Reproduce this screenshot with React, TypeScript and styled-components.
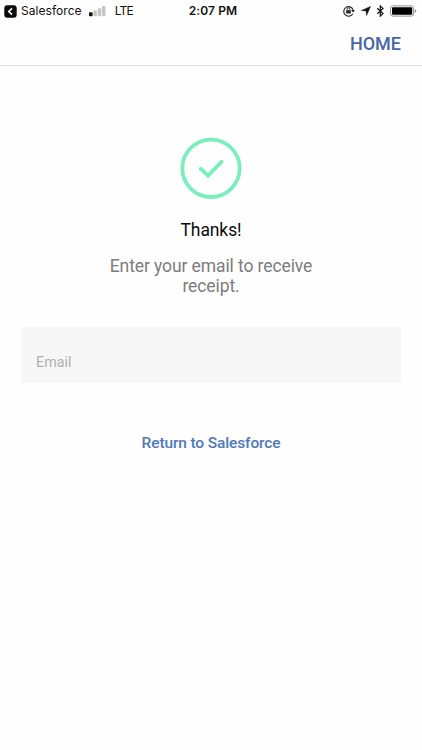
import React from "react";
import styled, { createGlobalStyle } from "styled-components";

const GlobalStyle = createGlobalStyle`
  * { box-sizing: border-box; }
  body { margin: 0; background: #fefefe; }
`;

const Screen = styled.div`
  display: flex;
  flex-direction: column;
  width: 422px;
  height: 750px;
  overflow: hidden;
  background: #fefefe;
  font-family: Roboto, sans-serif;
`;

const StatusBar = styled.header`
  display: grid;
  grid-template-columns: 1fr auto 1fr;
  align-items: center;
  height: 22px;
  padding: 0 4px;
  font-family: Inter, sans-serif;
  color: #111;
`;

const StatusGroup = styled.div<{ $end?: boolean }>`
  display: flex;
  align-items: center;
  justify-content: ${(p) => (p.$end ? "flex-end" : "flex-start")};
  padding-right: ${(p) => (p.$end ? 1 : 0)}px;
`;

const StatusText = styled.span<{ $bold?: boolean; $spacing: number; $left?: number }>`
  font-size: 12px;
  line-height: 22px;
  font-weight: ${(p) => (p.$bold ? 600 : 400)};
  letter-spacing: ${(p) => p.$spacing}px;
  margin-left: ${(p) => p.$left ?? 0}px;
  white-space: nowrap;
`;

const Glyph = styled.svg<{ $left?: number }>`
  display: block;
  flex: none;
  margin-left: ${(p) => p.$left ?? 0}px;
`;

const NavBar = styled.nav`
  display: flex;
  justify-content: flex-end;
  align-items: center;
  height: 44px;
  padding-right: 21px;
  border-bottom: 1px solid #dedede;
`;

const HomeButton = styled.button`
  padding: 0;
  border: 0;
  background: none;
  font: 500 18px/22px Roboto, sans-serif;
  color: #4566a8;
`;

const Content = styled.main`
  display: flex;
  flex-direction: column;
  align-items: center;
  padding: 71px 21px 0 21px;
`;

const Title = styled.h1`
  margin: 20px 0 0;
  font-size: 17.5px;
  line-height: 22px;
  font-weight: 400;
  letter-spacing: -0.1px;
  color: #0c0c0c;
`;

const Message = styled.p`
  width: 230px;
  margin: 15px 0 0;
  font-size: 17.5px;
  line-height: 20px;
  letter-spacing: -0.1px;
  text-align: center;
  color: #7c7c7c;
`;

const EmailField = styled.label`
  display: flex;
  align-items: flex-end;
  width: 100%;
  height: 56px;
  margin-top: 31px;
  padding: 0 15px 11px;
  background: #f7f7f7;
  font-size: 14.3px;
  line-height: 20px;
  color: #b0b0b0;
`;

const ReturnLink = styled.a`
  margin-top: 50px;
  font-size: 15.5px;
  line-height: 20px;
  font-weight: 500;
  letter-spacing: -0.13px;
  color: #5079b5;
`;

export default function App() {
  return (
    <Screen>
      <GlobalStyle />
      <StatusBar>
        <StatusGroup>
          <Glyph width="13" height="13" viewBox="0 0 13 13">
            <rect x="0.3" y="0.3" width="12.4" height="12.4" rx="3" fill="#0a0a0a" />
            <path d="M8 3.4 4.8 6.5 8 9.6" fill="none" stroke="#fff" strokeWidth="1.6" />
          </Glyph>
          <StatusText $spacing={0.05} $left={4}>Salesforce</StatusText>
          <Glyph $left={7} width="18" height="12" viewBox="0 0 18 12">
            <rect x="0" y="7.3" width="3.6" height="4" rx="0.7" fill="#111" />
            <rect x="4.5" y="5.3" width="3.4" height="6" rx="0.7" fill="#c4c4c4" />
            <rect x="8.8" y="3.2" width="3.4" height="8.1" rx="0.7" fill="#c4c4c4" />
            <rect x="13" y="1" width="3.4" height="10.3" rx="0.7" fill="#c4c4c4" />
          </Glyph>
          <StatusText $spacing={-0.7} $left={8}>LTE</StatusText>
        </StatusGroup>
        <StatusText $bold $spacing={0.1} $left={4}>2:07 PM</StatusText>
        <StatusGroup $end>
          <Glyph width="13" height="12" viewBox="0 0 13 12">
            <path d="M9.8 8.7A4.8 4.8 0 1 1 10.1 4.8" fill="none" stroke="#222" strokeWidth="1.1" />
            <path d="M8.2 5H12L10.1 7.4Z" fill="#222" />
            <rect x="3.2" y="5.2" width="4.6" height="3.4" rx="0.4" fill="#222" />
            <path d="M4.1 5.4V4.3a1.4 1.4 0 0 1 2.8 0v1.1" fill="none" stroke="#222" strokeWidth="0.9" />
          </Glyph>
          <Glyph $left={5} width="10" height="10" viewBox="0 0 10 10">
            <path d="M9.5.5 5.6 9.4 5.1 4.9.5 4.5Z" fill="#111" stroke="#111" strokeWidth="0.5" strokeLinejoin="round" />
          </Glyph>
          <Glyph $left={5} width="9" height="12" viewBox="0 0 9 12">
            <path d="M1.3 3.3 7 8.6 4.3 11.1V.9L7 3.4 1.3 8.7" fill="none" stroke="#111" strokeWidth="1.2" />
          </Glyph>
          <Glyph $left={5} width="27" height="12" viewBox="0 0 27 12">
            <rect x="0.6" y="0.9" width="23" height="10.2" rx="2.3" fill="#fff" stroke="#777" strokeWidth="0.8" />
            <rect x="2" y="2.3" width="20.2" height="7.4" rx="1" fill="#000" />
            <path d="M24.8 4.2q1.5.5 1.5 1.8t-1.5 1.8Z" fill="#888" />
          </Glyph>
        </StatusGroup>
      </StatusBar>
      <NavBar>
        <HomeButton>HOME</HomeButton>
      </NavBar>
      <Content>
        <Glyph width="62" height="62" viewBox="0 0 62 62" fill="none" stroke="#7aeebb" strokeWidth="3.8">
          <circle cx="31" cy="31.3" r="28.7" />
          <path d="M20.6 31.7 28 38.6 41.7 24.7" strokeLinecap="round" />
        </Glyph>
        <Title>Thanks!</Title>
        <Message>Enter your email to receive receipt.</Message>
        <EmailField>Email</EmailField>
        <ReturnLink>Return to Salesforce</ReturnLink>
      </Content>
    </Screen>
  );
}
